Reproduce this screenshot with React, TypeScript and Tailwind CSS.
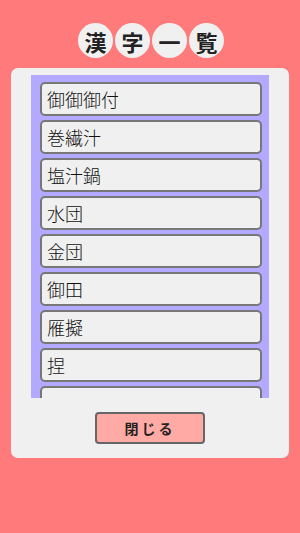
const title = ["漢", "字", "一", "覧"];

const kanji = ["御御御付", "巻繊汁", "塩汁鍋", "水団", "金団", "御田", "雁擬", "捏", ""];

export default function App() {
  return (
    <div
      className="min-h-[533px] w-[300px] bg-[#ff7b7b] pt-[23px]"
      style={{ fontFamily: '"Noto Sans CJK JP", "Noto Sans", sans-serif' }}
    >
      <div className="flex justify-center gap-[2px] pl-[2px]">
        {title.map((c) => (
          <div
            key={c}
            className="flex h-[35px] w-[35px] items-center justify-center rounded-full bg-[#f0f0f0] text-[22px] font-bold leading-none text-[#222]"
          >
            {c}
          </div>
        ))}
      </div>

      <div className="mx-[11px] mt-[10px] rounded-[7px] bg-[#f0f0f0] px-[20px] pt-[7px] pb-[14px]">
        <div className="h-[323px] overflow-hidden bg-[#b3aaff] pl-[9px] pr-[7px] pt-[7px]">
          <div className="flex flex-col gap-[4px]">
            {kanji.map((k, i) => (
              <div
                key={i}
                className="flex h-[34px] shrink-0 items-center rounded-[5px] border-2 border-[#777] bg-[#f0f0f0] pl-[5px] text-[18px] font-light leading-none text-[#111]"
              >
                {k}
              </div>
            ))}
          </div>
        </div>

        <div className="mt-[14px] flex justify-center">
          <button className="h-[32px] w-[110px] rounded-[4px] border-2 border-[#666] bg-[#ffaaa5] text-[14px] font-bold tracking-[3px] text-[#222]">
            閉じる
          </button>
        </div>
      </div>
    </div>
  );
}
